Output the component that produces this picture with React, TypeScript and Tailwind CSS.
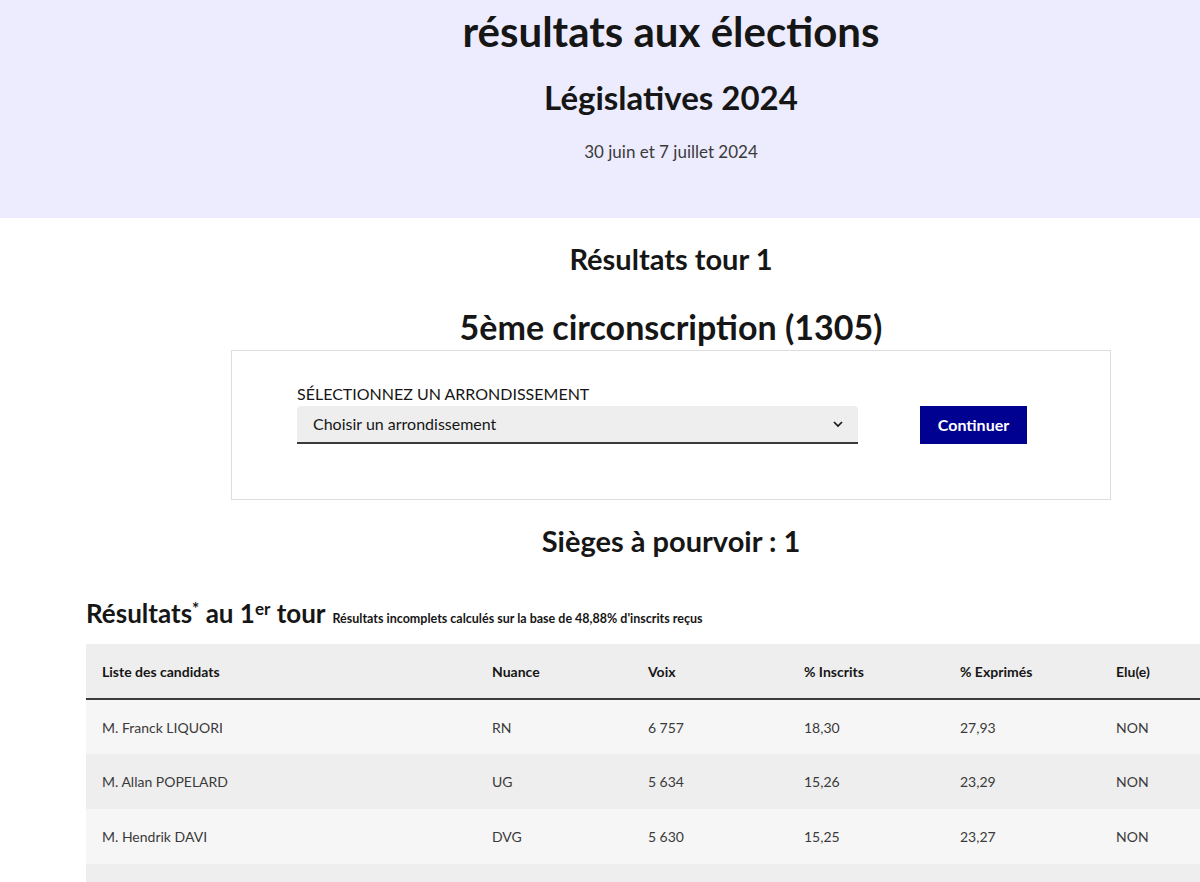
const rows = [
  { name: "M. Franck LIQUORI", nuance: "RN", voix: "6\u202F757", inscrits: "18,30", exprimes: "27,93", elu: "NON" },
  { name: "M. Allan POPELARD", nuance: "UG", voix: "5\u202F634", inscrits: "15,26", exprimes: "23,29", elu: "NON" },
  { name: "M. Hendrik DAVI", nuance: "DVG", voix: "5\u202F630", inscrits: "15,25", exprimes: "23,27", elu: "NON" },
  { name: "", nuance: "", voix: "", inscrits: "", exprimes: "", elu: "" },
];

const font = { fontFamily: "Lato, 'Open Sans', sans-serif" };

export default function App() {
  return (
    <div className="w-[1200px] h-[882px] overflow-hidden bg-white text-[#161616]" style={font}>
      {/* bandeau */}
      <header className="h-[218px] bg-[#ececfe]">
        <div className="ml-[86px] w-[1170px] flex flex-col items-center">
          <h1 className="mt-[6px] text-[42px] leading-[50px] font-bold">résultats aux élections</h1>
          <h2 className="mt-[21px] text-[33px] leading-[40px] font-bold">Législatives 2024</h2>
          <p className="mt-[23px] text-[17px] leading-[24px] text-[#3a3a3a]">30 juin et 7 juillet 2024</p>
        </div>
      </header>

      <div className="ml-[86px] w-[1170px]">
        <div className="flex flex-col items-center">
          <h3 className="mt-[24px] text-[29px] leading-[34px] font-bold">Résultats tour 1</h3>
          <h2 className="mt-[31px] text-[34px] leading-[40px] font-bold">5ème circonscription (1305)</h2>

          <div className="mt-[3px] w-[880px] h-[150px] border border-[#dddddd] flex items-start pt-[31px] pl-[65px]">
            <div className="flex flex-col w-[561px]">
              <label className="text-[16px] leading-[24px] uppercase text-[#161616]">Sélectionnez un arrondissement</label>
              <div className="h-[38px] bg-[#eeeeee] rounded-t-[4px] border-b-2 border-[#3a3a3a] flex items-center justify-between pl-[16px] pr-[12px]">
                <span className="text-[16px] text-[#161616]">Choisir un arrondissement</span>
                <svg width="16" height="16" viewBox="0 0 24 24" fill="none" stroke="#161616" strokeWidth="2.5">
                  <path d="M6 9l6 6 6-6" />
                </svg>
              </div>
            </div>
            <button className="mt-[24px] ml-[62px] h-[38px] w-[107px] bg-[#000091] text-white text-[16px] font-bold">Continuer</button>
          </div>

          <h3 className="mt-[23px] text-[29px] leading-[36px] font-bold">Sièges à pourvoir : 1</h3>
        </div>

        <div className="mt-[38px] h-[32px] flex items-baseline gap-[7px]">
          <span className="text-[26px] leading-[32px] font-bold">
            Résultats<sup className="text-[17px]">*</sup> au 1<sup className="text-[17px]">er</sup> tour
          </span>
          <span className="text-[12.5px] font-bold">Résultats incomplets calculés sur la base de 48,88% d'inscrits reçus</span>
        </div>

        <table className="mt-[15px] w-[1170px] table-fixed border-collapse text-[14px]">
          <colgroup>
            <col className="w-[390px]" />
            <col className="w-[156px]" />
            <col className="w-[156px]" />
            <col className="w-[156px]" />
            <col className="w-[156px]" />
            <col className="w-[156px]" />
          </colgroup>
          <thead>
            <tr className="bg-[#eeeeee] border-b-2 border-[#3a3a3a] h-[55px] text-left">
              <th className="pl-[16px] font-bold">Liste des candidats</th>
              <th className="pl-[16px] font-bold">Nuance</th>
              <th className="pl-[16px] font-bold">Voix</th>
              <th className="pl-[16px] font-bold">% Inscrits</th>
              <th className="pl-[16px] font-bold">% Exprimés</th>
              <th className="pl-[16px] font-bold">Elu(e)</th>
            </tr>
          </thead>
          <tbody>
            {rows.map((r, i) => (
              <tr key={i} className={`h-[55px] text-[#3a3a3a] ${i % 2 === 0 ? "bg-[#f6f6f6]" : "bg-[#eeeeee]"}`}>
                <td className="pl-[16px]">{r.name}</td>
                <td className="pl-[16px]">{r.nuance}</td>
                <td className="pl-[16px]">{r.voix}</td>
                <td className="pl-[16px]">{r.inscrits}</td>
                <td className="pl-[16px]">{r.exprimes}</td>
                <td className="pl-[16px]">{r.elu}</td>
              </tr>
            ))}
          </tbody>
        </table>
      </div>
    </div>
  );
}
